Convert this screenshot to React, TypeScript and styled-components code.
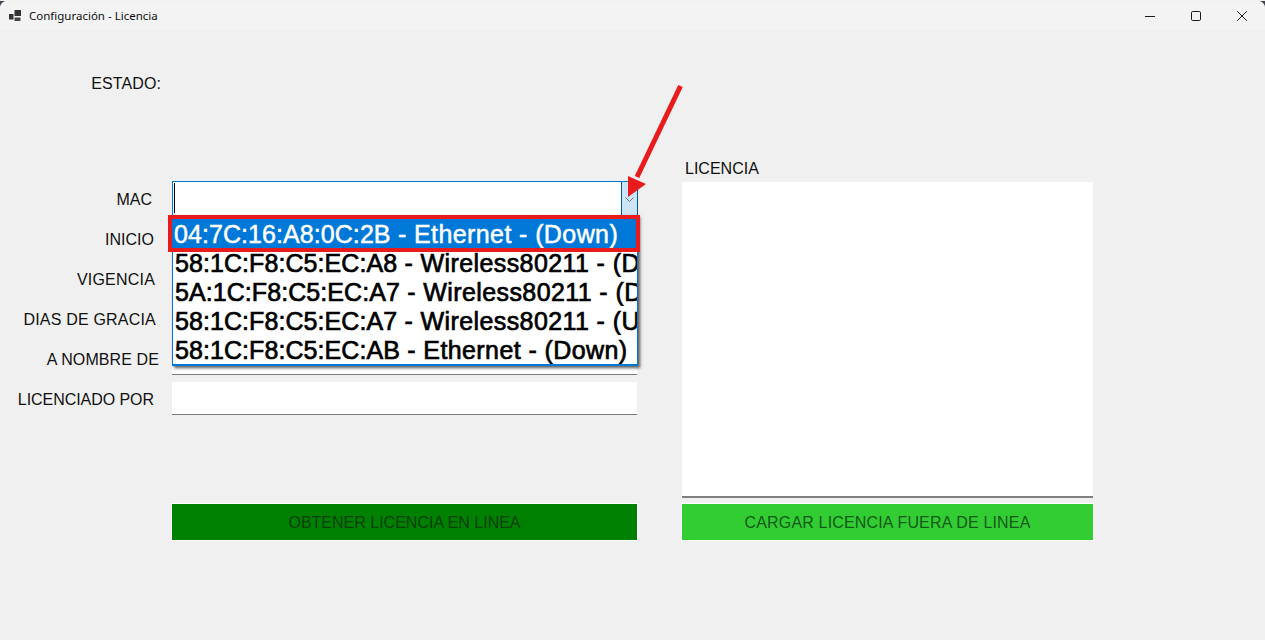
import React from "react";
import styled, { createGlobalStyle } from "styled-components";

const Global = createGlobalStyle`
  html, body { margin: 0; padding: 0; background: #f0f0f0; overflow: hidden; }
  * { box-sizing: border-box; }
`;

const Frame = styled.div`
  position: relative;
  width: 1265px;
  height: 640px;
  background: #3f4450;
  font-family: "Liberation Sans", Arial, sans-serif;
  font-size: 16px;
  color: #111;
`;

const Window = styled.div`
  display: flex;
  flex-direction: column;
  height: 639px;
  margin-top: 1px;
  background: #f0f0f0;
  border-radius: 7px 7px 0 0;
  overflow: hidden;
`;

const TitleBar = styled.header`
  display: flex;
  align-items: center;
  height: 29px;
  padding-left: 9px;
  background: #f3f3f3;
`;

const AppIcon = styled.svg`
  width: 12px;
  height: 12px;
  margin-right: 8px;
  flex: none;
`;

const Title = styled.span`
  flex: 1;
  font-family: "Noto Sans", sans-serif;
  font-size: 11.5px;
  color: #111;
`;

const WinButton = styled.button`
  display: flex;
  align-items: center;
  justify-content: center;
  width: 46px;
  height: 29px;
  padding: 0;
  border: 0;
  background: transparent;
`;

const Body = styled.main`
  display: flex;
  gap: 45px;
`;

const LeftColumn = styled.section`
  display: flex;
  flex-direction: column;
  width: 637px;
`;

const StatusLabel = styled.div`
  align-self: flex-start;
  width: 161px;
  margin-top: 44px;
  height: 20px;
  line-height: 20px;
  text-align: right;
  letter-spacing: 0.1px;
`;

const Form = styled.div`
  display: flex;
  flex-direction: column;
  margin-top: 87px;
`;

const Row = styled.div`
  display: grid;
  grid-template-columns: 172px 465px;
  height: 40px;
`;

const Label = styled.label<{ $end: number; $spacing?: number }>`
  line-height: 38px;
  text-align: right;
  white-space: nowrap;
  padding-right: ${(p) => 172 - p.$end}px;
  letter-spacing: ${(p) => p.$spacing ?? 0}px;
`;

const Input = styled.div`
  margin-top: 1px;
  height: 33px;
  background: #fff;
  border-bottom: 1px solid #7a7a7a;
`;

const Combo = styled.div`
  position: relative;
  display: flex;
  height: 36px;
  background: #fff;
  border: 1px solid #0078d7;
  border-right-color: #005a9e;
  width: 466px;
`;

const ComboText = styled.div`
  flex: 1;
  padding: 1px 0 0 1px;
`;

const Caret = styled.div`
  width: 1px;
  height: 30px;
  background: #000;
`;

const ComboArrow = styled.div`
  display: flex;
  justify-content: center;
  width: 16px;
  padding-top: 15px;
  background: #cce4f7;
  border-left: 1px solid #005a9e;
`;

const Dropdown = styled.ul`
  position: absolute;
  z-index: 2;
  left: -1px;
  top: 33px;
  width: 466px;
  height: 151px;
  margin: 0;
  padding: 4px 0 0;
  list-style: none;
  background: #fff;
  border-left: 1px solid #0078d7;
  border-right: 1px solid #0078d7;
  border-bottom: 2px solid #0078d7;
  box-shadow: 2px 2px 3px rgba(0, 0, 0, 0.65);
`;

const Item = styled.li<{ $selected?: boolean }>`
  position: relative;
  z-index: ${(p) => (p.$selected ? 1 : 0)};
  height: 29px;
  line-height: 31px;
  padding-left: 2px;
  font-size: 25px;
  letter-spacing: 0.4px;
  white-space: nowrap;
  overflow: hidden;
  color: ${(p) => (p.$selected ? "#fff" : "#000")};
  background: ${(p) => (p.$selected ? "#0078d7" : "transparent")};
  -webkit-text-stroke: ${(p) => (p.$selected ? "0.5px #fff" : "0.7px #000")};
  margin-left: ${(p) => (p.$selected ? "-1px" : "0")};
  margin-right: ${(p) => (p.$selected ? "1px" : "0")};
  outline: ${(p) => (p.$selected ? "4px solid #e81c1c" : "none")};
`;

const MacPart = styled.span`
  letter-spacing: 0.07px;
`;

const ActionButton = styled.button<{ $bg: string; $fg: string; $spacing?: number }>`
  display: block;
  width: 100%;
  height: 38px;
  padding: 2px 0 0;
  border: 1px solid #fff;
  background: ${(p) => p.$bg};
  color: ${(p) => p.$fg};
  font-family: inherit;
  font-size: 16px;
  letter-spacing: ${(p) => p.$spacing ?? 0}px;
`;

const LeftAction = styled.div`
  margin-top: 82px;
  margin-left: 171px;
  width: 467px;
`;

const RightColumn = styled.section`
  display: flex;
  flex-direction: column;
  width: 411px;
`;

const LicenseLabel = styled.div`
  margin-top: 129px;
  padding-left: 3px;
  height: 20px;
  line-height: 20px;
`;

const LicenseBox = styled.div`
  margin-top: 3px;
  height: 316px;
  background: #fff;
  border-bottom: 2px solid #7f7f7f;
`;

const RightAction = styled.div`
  margin: 5px -1px 0;
`;

const Pointer = styled.svg`
  position: absolute;
  z-index: 3;
  left: 620px;
  top: 80px;
  width: 70px;
  height: 125px;
`;

const Glyph = ({ children }: { children: React.ReactNode }) => (
  <svg width="12" height="12" viewBox="0 0 12 12" fill="none" stroke="#1a1a1a" strokeWidth="1">
    {children}
  </svg>
);

const rows = [
  { label: "INICIO", end: 154 },
  { label: "VIGENCIA", end: 155, spacing: 0.2 },
  { label: "DIAS DE GRACIA", end: 156, spacing: 0.2 },
  { label: "A NOMBRE DE", end: 159, spacing: 0.1 },
  { label: "LICENCIADO POR", end: 154, spacing: -0.05 },
];

const macs = [
  ["04:7C:16:A8:0C:2B", " - Ethernet - (Down)"],
  ["58:1C:F8:C5:EC:A8", " - Wireless80211 - (Down)"],
  ["5A:1C:F8:C5:EC:A7", " - Wireless80211 - (Down)"],
  ["58:1C:F8:C5:EC:A7", " - Wireless80211 - (Up)"],
  ["58:1C:F8:C5:EC:AB", " - Ethernet - (Down)"],
];

export default function App() {
  return (
    <Frame>
      <Global />
      <Window>
        <TitleBar>
          <AppIcon viewBox="0 0 12 12">
            <rect x="0" y="4" width="4.5" height="5.5" fill="#333" />
            <rect x="5.5" y="0" width="6.5" height="6" fill="#333" />
            <rect x="5.5" y="7.5" width="6" height="3.5" fill="#444" />
          </AppIcon>
          <Title>Configuración - Licencia</Title>
          <WinButton aria-label="Minimizar">
            <Glyph><path d="M1 6.5h10" /></Glyph>
          </WinButton>
          <WinButton aria-label="Maximizar">
            <Glyph><rect x="1.5" y="1.5" width="9" height="9" rx="1.2" /></Glyph>
          </WinButton>
          <WinButton aria-label="Cerrar">
            <Glyph><path d="M1.2 1.2l9.6 9.6M10.8 1.2l-9.6 9.6" /></Glyph>
          </WinButton>
        </TitleBar>
        <Body>
          <LeftColumn>
            <StatusLabel>ESTADO:</StatusLabel>
            <Form>
              <Row>
                <Label $end={152}>MAC</Label>
                <Combo>
                  <ComboText><Caret /></ComboText>
                  <ComboArrow>
                    <svg width="9" height="6" viewBox="0 0 9 6" fill="none" stroke="#777" strokeWidth="1">
                      <path d="M0.5 0.5l4 4 4-4" />
                    </svg>
                  </ComboArrow>
                  <Dropdown>
                    {macs.map(([mac, rest], i) => (
                      <Item key={mac + rest} $selected={i === 0}>
                        <MacPart>{mac}</MacPart>{rest}
                      </Item>
                    ))}
                  </Dropdown>
                </Combo>
              </Row>
              {rows.map((r) => (
                <Row key={r.label}>
                  <Label $end={r.end} $spacing={r.spacing}>{r.label}</Label>
                  <Input />
                </Row>
              ))}
            </Form>
            <LeftAction>
              <ActionButton $bg="#008000" $fg="#0b3f0b">OBTENER LICENCIA EN LINEA</ActionButton>
            </LeftAction>
          </LeftColumn>
          <RightColumn>
            <LicenseLabel>LICENCIA</LicenseLabel>
            <LicenseBox />
            <RightAction>
              <ActionButton $bg="#32cd32" $fg="#14591a" $spacing={0.17}>CARGAR LICENCIA FUERA DE LINEA</ActionButton>
            </RightAction>
          </RightColumn>
        </Body>
      </Window>
      <Pointer viewBox="620 80 70 125">
        <path d="M680.5 85 L637 176" stroke="#e81c1c" strokeWidth="5" fill="none" />
        <path d="M628 196 L628 175 L646 183 Z" fill="#e81c1c" />
      </Pointer>
    </Frame>
  );
}
